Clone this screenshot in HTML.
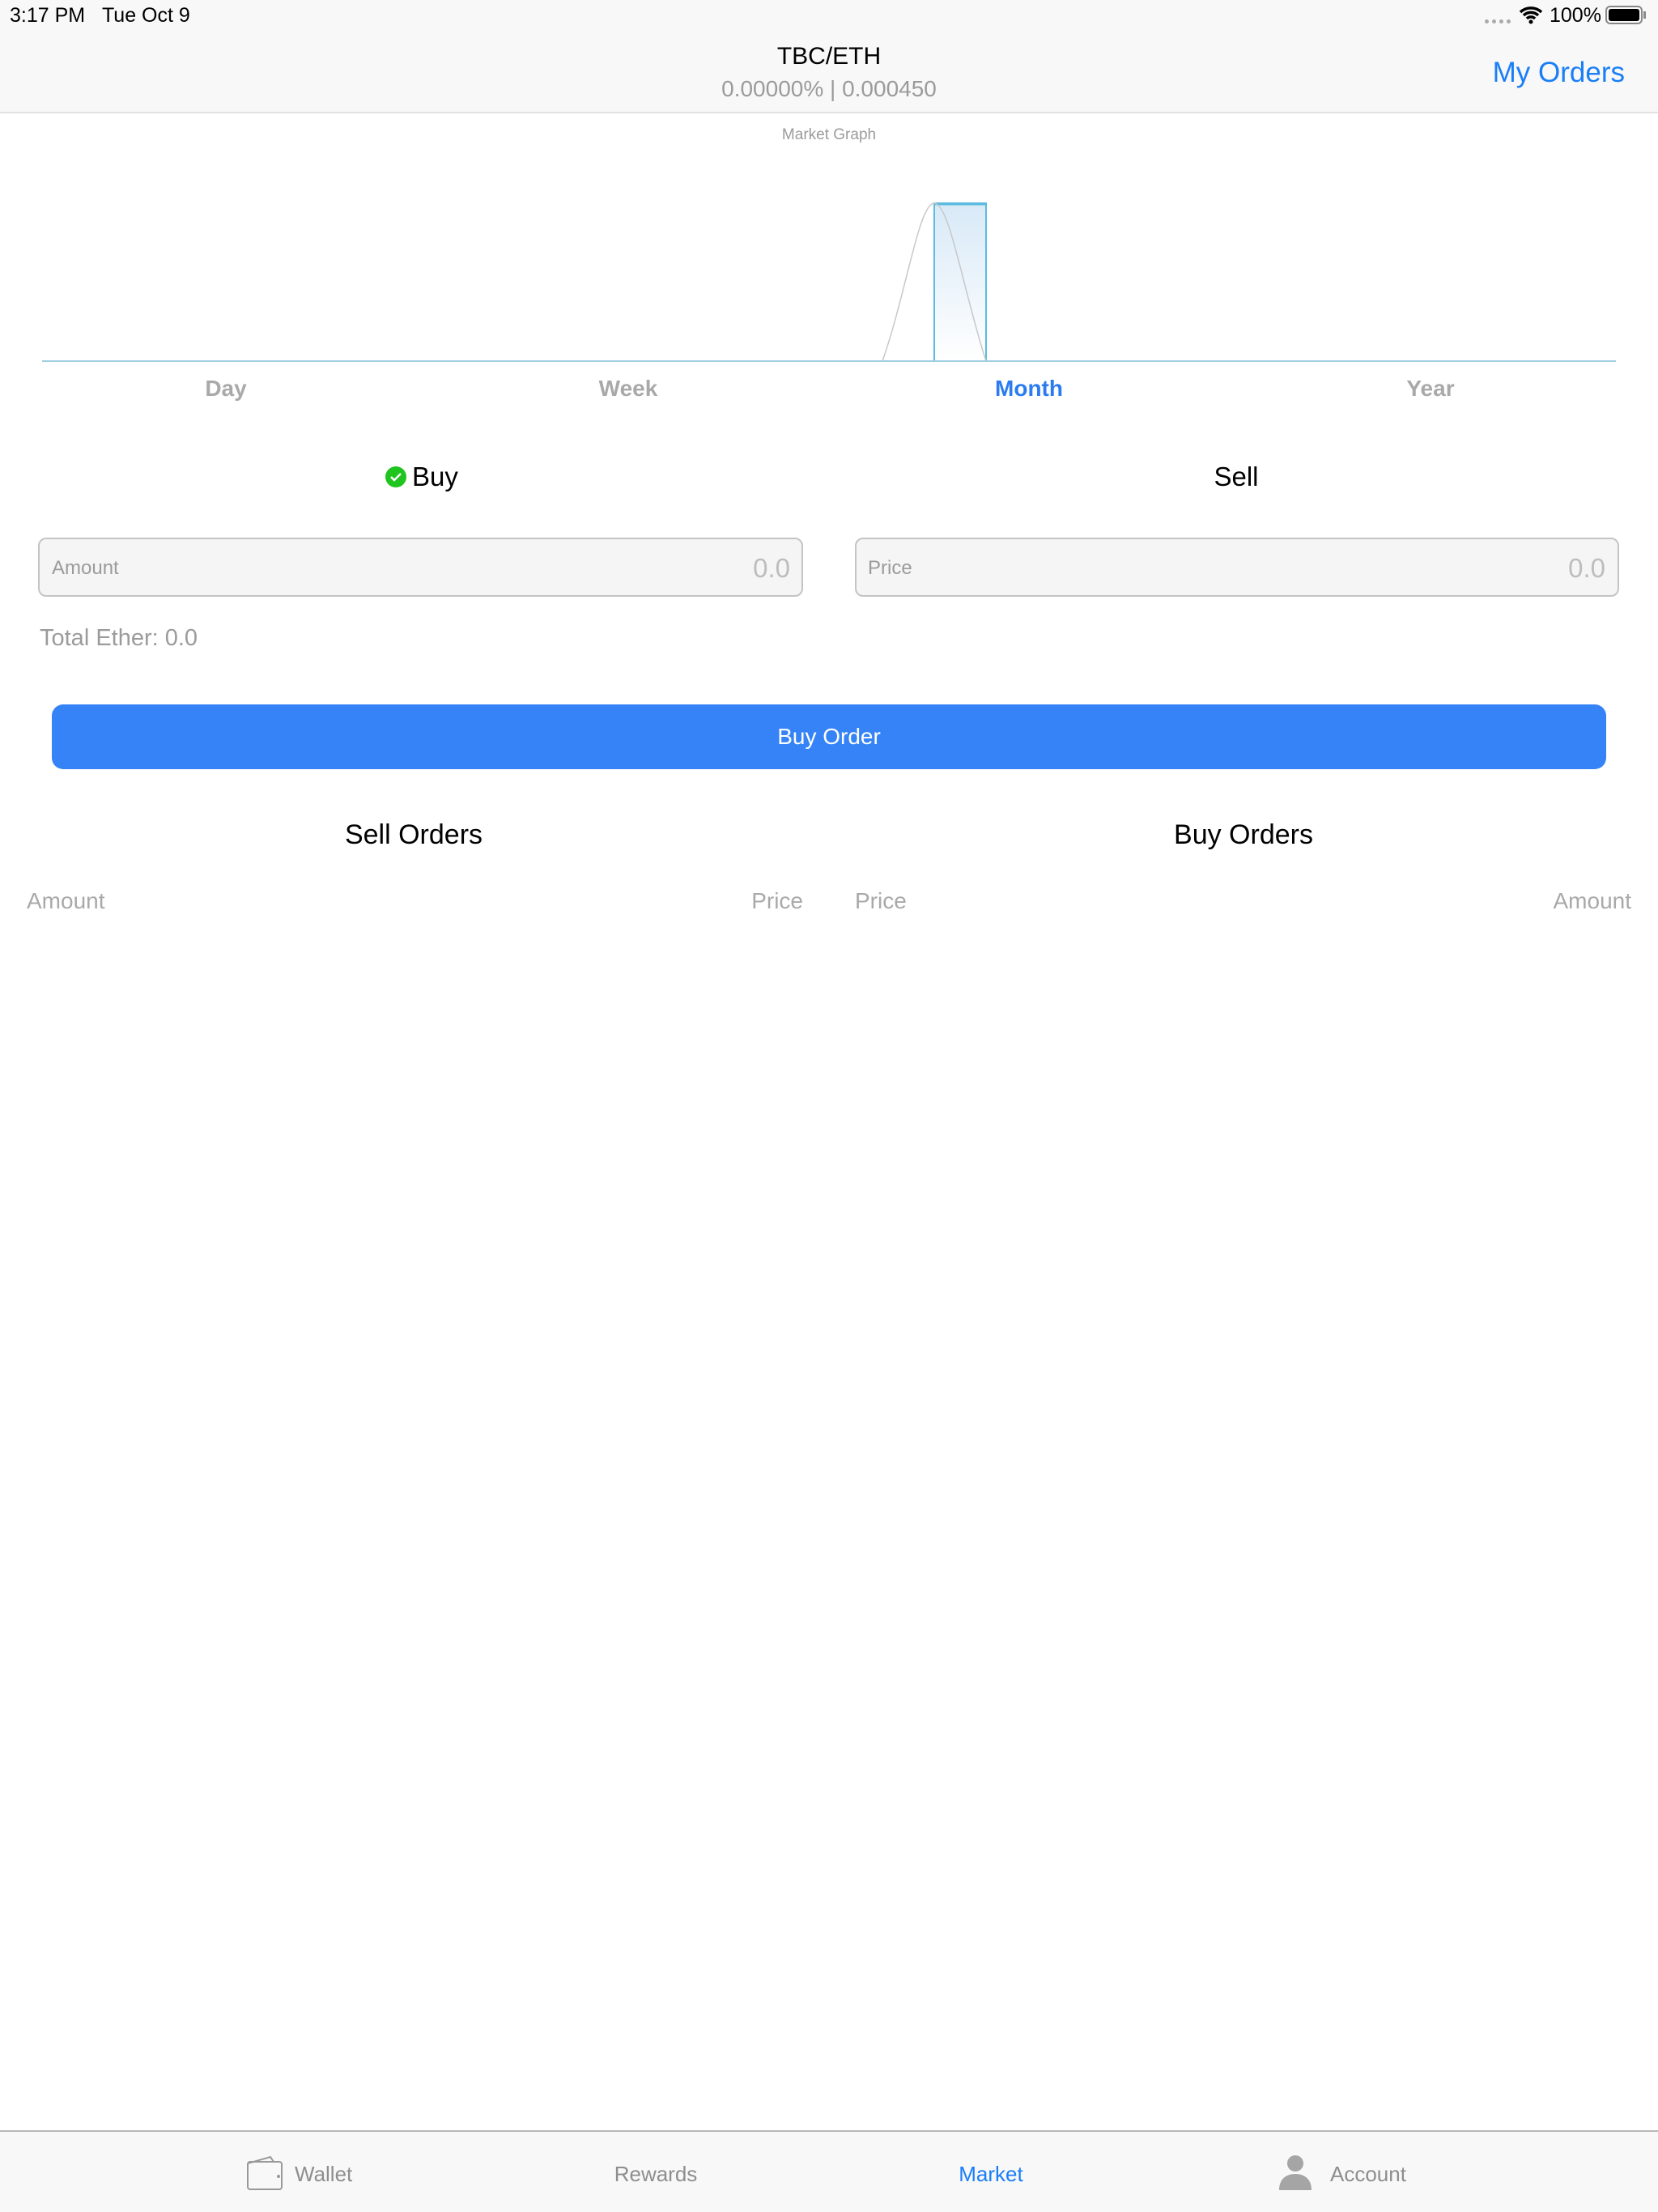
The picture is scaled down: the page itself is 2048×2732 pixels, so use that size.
<!DOCTYPE html>
<html><head><meta charset="utf-8"><style>
*{margin:0;padding:0;box-sizing:border-box}
body{width:2048px;height:2732px;position:relative;background:#fff;font-family:"Liberation Sans",sans-serif;overflow:hidden}
.a{position:absolute;white-space:nowrap}
.c{transform:translateX(-50%)}
.r{transform:translateX(-100%)}
.g{color:#9b9b9b}
</style></head><body>
<div class="a" style="left:0;top:0;width:2048px;height:140px;background:#f8f8f8;border-bottom:2px solid #e2e2e2"></div>
<div class="a" style="left:12px;top:5px;font-size:25px">3:17 PM&nbsp;&nbsp;&nbsp;Tue Oct 9</div>
<div class="a" style="left:1834px;top:24px;width:32px;height:6px;border-top:5px dotted #aaa"></div>
<svg class="a" style="left:1876px;top:7px" width="30" height="24" viewBox="0 0 30 24"><path d="M2 8a19 19 0 0 1 26 0M6 12a13 13 0 0 1 18 0M10 16a7 7 0 0 1 10 0" stroke="#000" stroke-width="3.5" fill="none"/><circle cx="15" cy="20" r="2.5"/></svg>
<div class="a" style="left:1914px;top:5px;font-size:25px">100%</div>
<div class="a" style="left:1983px;top:7px;width:46px;height:23px;border:2px solid #888;border-radius:6px;padding:2px"><div style="width:100%;height:100%;background:#000;border-radius:3px"></div></div>
<div class="a" style="left:2030px;top:14px;width:3px;height:9px;background:#888"></div>
<div class="a c" style="left:1024px;top:53px;font-size:30px">TBC/ETH</div>
<div class="a c g" style="left:1024px;top:94px;font-size:28px">0.00000% | 0.000450</div>
<div class="a r" style="left:2007px;top:70px;font-size:35px;color:#1a7ef7">My Orders</div>
<div class="a c g" style="left:1024px;top:156px;font-size:19px">Market Graph</div>
<svg class="a" style="left:0;top:240px" width="2048" height="215">
<defs><linearGradient id="gr" x1="0" y1="0" x2="0" y2="1"><stop offset="0" stop-color="#d8e9f7"/><stop offset="1" stop-color="#fff"/></linearGradient></defs>
<rect x="1154" y="11" width="64" height="195" fill="url(#gr)"/>
<path d="M1154 206V11H1218V206" stroke="#5bbbe0" stroke-width="2" fill="none"/>
<line x1="1154" y1="12" x2="1218" y2="12" stroke="#5bbbe0" stroke-width="3"/>
<path d="M1090 206C1120 120 1135 11 1154 11S1190 120 1218 206" stroke="#c8c8c8" stroke-width="1.5" fill="none"/>
<line x1="52" y1="206" x2="1996" y2="206" stroke="#9fcfe0" stroke-width="2"/>
</svg>
<div class="a c g" style="left:279px;top:464px;font-size:28px;font-weight:bold;color:#a9a9a9">Day</div>
<div class="a c g" style="left:776px;top:464px;font-size:28px;font-weight:bold;color:#a9a9a9">Week</div>
<div class="a c" style="left:1271px;top:464px;font-size:28px;font-weight:bold;color:#2b7cf0">Month</div>
<div class="a c g" style="left:1767px;top:464px;font-size:28px;font-weight:bold;color:#a9a9a9">Year</div>
<svg class="a" style="left:475px;top:575px" width="28" height="28"><circle cx="14" cy="14" r="13" fill="#1fc41f"/><path d="M8 14l4 4 8-8" stroke="#fff" stroke-width="2.5" fill="none"/></svg>
<div class="a" style="left:509px;top:570px;font-size:33px">Buy</div>
<div class="a c" style="left:1527px;top:570px;font-size:33px">Sell</div>
<div class="a" style="left:47px;top:664px;width:945px;height:73px;background:#f5f5f5;border:2px solid #c4c4c4;border-radius:10px"></div>
<div class="a g" style="left:64px;top:688px;font-size:24px">Amount</div>
<div class="a r" style="left:976px;top:683px;font-size:33px;color:#bdbdbd">0.0</div>
<div class="a" style="left:1056px;top:664px;width:944px;height:73px;background:#f5f5f5;border:2px solid #c4c4c4;border-radius:10px"></div>
<div class="a g" style="left:1072px;top:688px;font-size:24px">Price</div>
<div class="a r" style="left:1983px;top:683px;font-size:33px;color:#bdbdbd">0.0</div>
<div class="a g" style="left:49px;top:772px;font-size:29px">Total Ether: 0.0</div>
<div class="a" style="left:64px;top:870px;width:1920px;height:80px;background:#3583f6;border-radius:14px"></div>
<div class="a c" style="left:1024px;top:894px;font-size:28px;color:#fff">Buy Order</div>
<div class="a c" style="left:511px;top:1012px;font-size:34px">Sell Orders</div>
<div class="a c" style="left:1536px;top:1012px;font-size:34px">Buy Orders</div>
<div class="a g" style="left:33px;top:1097px;font-size:28px;color:#a9a9a9">Amount</div>
<div class="a r g" style="left:992px;top:1097px;font-size:28px;color:#a9a9a9">Price</div>
<div class="a g" style="left:1056px;top:1097px;font-size:28px;color:#a9a9a9">Price</div>
<div class="a r g" style="left:2015px;top:1097px;font-size:28px;color:#a9a9a9">Amount</div>
<div class="a" style="left:0;top:2631px;width:2048px;height:101px;background:#f8f8f8;border-top:2px solid #b8b8b8"></div>
<svg class="a" style="left:304px;top:2662px" width="48" height="44"><rect x="2" y="8" width="42" height="34" rx="3" fill="none" stroke="#999" stroke-width="2"/><path d="M2 10L30 2l4 6" stroke="#999" stroke-width="2" fill="none"/><circle cx="40" cy="26" r="2" fill="#999"/></svg>
<div class="a" style="left:364px;top:2670px;font-size:26px;color:#8e8e8e">Wallet</div>
<div class="a c" style="left:810px;top:2670px;font-size:26px;color:#8e8e8e">Rewards</div>
<div class="a c" style="left:1224px;top:2670px;font-size:26px;color:#1a7ef7">Market</div>
<svg class="a" style="left:1578px;top:2661px" width="44" height="44"><circle cx="22" cy="11" r="10" fill="#a5a5a5"/><path d="M2 44c0-14 9-20 20-20s20 6 20 20z" fill="#a5a5a5"/></svg>
<div class="a" style="left:1643px;top:2670px;font-size:26px;color:#8e8e8e">Account</div>
</body></html>
